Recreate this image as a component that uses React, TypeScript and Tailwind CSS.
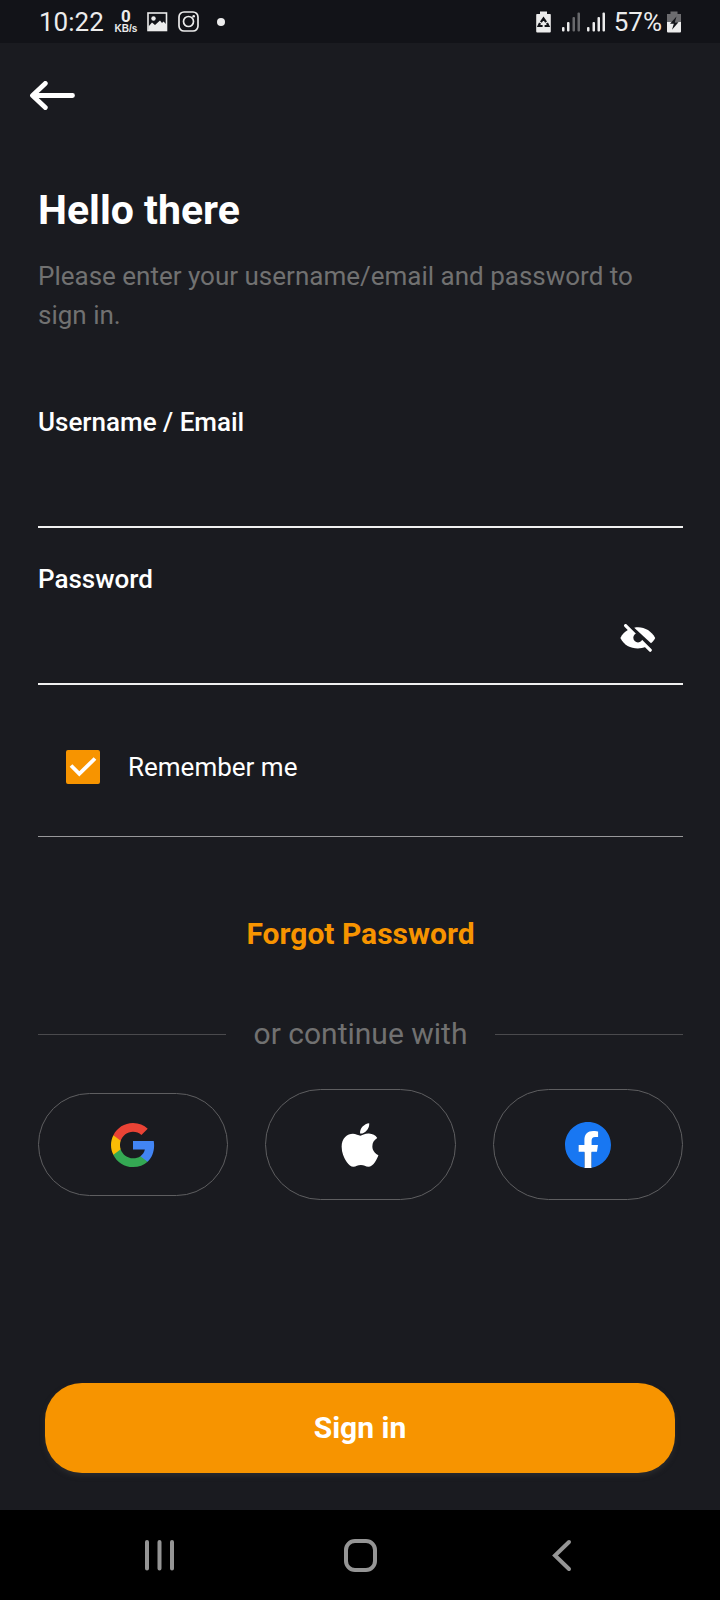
import { useState } from "react";
import { FaApple } from "react-icons/fa";

function StatusBar() {
  return (
    <header className="flex h-[43px] items-center justify-between bg-[#121318] px-[39px] text-[#ececec]">
      <div className="flex items-center">
        <span className="w-[66px] text-[26px] leading-[30px]">10:22</span>
        <span className="ml-[9px] flex w-[24px] flex-col items-center font-bold">
          <span className="text-[17px] leading-[15px]">0</span>
          <span className="font-['Liberation_Sans',sans-serif] text-[10px] leading-[10px]">KB/s</span>
        </span>
        <svg className="ml-[9px] h-[20px] w-[21px]" viewBox="0 0 21 20" aria-hidden="true">
          <rect x="1" y="1" width="18.5" height="17.5" fill="none" stroke="currentColor" strokeWidth="1.6" />
          <circle cx="6.5" cy="6.5" r="2.2" fill="currentColor" />
          <path d="M1.5 14.5 L5 10.5 L8 13 L13 8.5 L15 11 L16.5 9.5 L19 12 V18 H1.5Z" fill="currentColor" />
        </svg>
        <svg className="ml-[10px] h-[21px] w-[21px]" viewBox="0 0 21 21" fill="none" stroke="currentColor" aria-hidden="true">
          <rect x="1" y="1" width="19" height="19" rx="5" strokeWidth="1.7" />
          <circle cx="10.5" cy="10.5" r="5" strokeWidth="1.7" />
          <circle cx="15.7" cy="5.3" r="1.3" fill="currentColor" stroke="none" />
        </svg>
        <span className="ml-[18px] size-[8px] rounded-full bg-[#ececec]" />
      </div>
      <div className="flex items-center">
        <svg className="h-[22px] w-[15px]" viewBox="0 0 15 22" aria-hidden="true">
          <path d="M4 0.5h7v2.5h3q0.8 0 0.8 0.8V20.5q0 1-1 1H1.2q-1 0-1-1V3.8Q0.2 3 1 3h3Z" fill="currentColor" />
          <path d="M4.9 11.2 7.5 7.4l2.6 3.8M11 12l1.4 3H8.6M6.6 15H2.6L4 12" fill="none" stroke="#121318" strokeWidth="2.2" />
        </svg>
        <svg className="ml-[11px] h-[20px] w-[44px]" viewBox="0 0 44 20" fill="currentColor" aria-hidden="true">
          <rect x="0" y="15" width="2.5" height="4.5" rx="1" />
          <rect x="5" y="10" width="2.5" height="9.5" rx="1" />
          <rect x="10.5" y="5" width="2.5" height="14.5" rx="1" opacity=".4" />
          <rect x="15.5" y="0.5" width="2.5" height="19" rx="1" opacity=".4" />
          <rect x="25" y="15" width="2.5" height="4.5" rx="1" />
          <rect x="30.5" y="10" width="2.5" height="9.5" rx="1" />
          <rect x="35.5" y="5" width="2.5" height="14.5" rx="1" />
          <rect x="40.5" y="0.5" width="2.5" height="19" rx="1" />
        </svg>
        <span className="ml-[8px] text-[26px] leading-[30px]">57%</span>
        <svg className="ml-[5px] h-[22px] w-[14px]" viewBox="0 0 14 22" aria-hidden="true">
          <path d="M3.5 0.5h7v2.5H14V11H0V3h3.5Z" fill="#6c6c6f" />
          <path d="M0 11h14v9.5q0 1-1 1H1q-1 0-1-1Z" fill="currentColor" />
          <path d="M9.5 5.5 3 12.8h3.8L5 18.8 11.5 11.2H7.8Z" fill="#121318" />
        </svg>
      </div>
    </header>
  );
}

function EyeOffIcon() {
  return (
    <svg className="h-[30px] w-[36px]" viewBox="0 0 36 30" fill="#fff" aria-hidden="true">
      <mask id="pupil">
        <rect width="36" height="30" fill="#fff" />
        <circle cx="18" cy="13.8" r="4.7" fill="#000" />
      </mask>
      <g mask="url(#pupil)">
        <path d="M0.4 14C2.2 10.4 5 7.6 8.5 5.6L26 22.8C23.2 24 20.5 24.5 17.8 24.5 10.5 24.5 3.8 21 0.4 14Z" />
        <path d="M5.6 1.6 30.2 26.2" stroke="#fff" strokeWidth="3.2" strokeLinecap="round" />
      </g>
      <path d="M14.2 3.7C22.5 1.8 31 6 35.2 14 34.2 16 33 17.6 31 19.3Z" />
    </svg>
  );
}

function GoogleIcon() {
  return (
    <svg className="size-[48px]" viewBox="0 0 24 24" aria-hidden="true">
      <path fill="#4285F4" d="M22.56 12.25c0-.78-.07-1.53-.2-2.25H12v4.26h5.92c-.26 1.37-1.04 2.53-2.21 3.31v2.77h3.57c2.08-1.92 3.28-4.74 3.28-8.09z" />
      <path fill="#34A853" d="M12 23c2.97 0 5.46-.98 7.28-2.66l-3.57-2.77c-.98.66-2.23 1.06-3.71 1.06-2.86 0-5.29-1.93-6.16-4.53H2.18v2.84C3.99 20.53 7.7 23 12 23z" />
      <path fill="#FBBC05" d="M5.84 14.09c-.22-.66-.35-1.36-.35-2.09s.13-1.43.35-2.09V7.07H2.18C1.43 8.55 1 10.22 1 12s.43 3.45 1.18 4.93l2.85-2.22.81-.62z" />
      <path fill="#EA4335" d="M12 5.38c1.62 0 3.06.56 4.21 1.64l3.15-3.15C17.45 2.09 14.97 1 12 1 7.7 1 3.99 3.47 2.18 7.07l3.66 2.84c.87-2.6 3.3-4.53 6.16-4.53z" />
    </svg>
  );
}

function FacebookIcon() {
  return (
    <svg className="size-[46px]" viewBox="8 8 496 496" aria-hidden="true">
      <path fill="#fff" d="M150 100h220v235h-75v169h-78V335h-67Z" />
      <path fill="#1877F2" d="M504 256C504 119 393 8 256 8S8 119 8 256c0 123.78 90.69 226.38 209.25 245V327.69h-63V256h63v-54.64c0-62.15 37-96.48 93.67-96.48 27.14 0 55.52 4.84 55.52 4.84v61h-31.28c-30.8 0-40.41 19.12-40.41 38.73V256h68.78l-11 71.69h-57.78V501C413.31 482.38 504 379.78 504 256z" />
    </svg>
  );
}

export default function App() {
  const [showPassword, setShowPassword] = useState(false);

  return (
    <div className="flex min-h-screen flex-col bg-[#1a1b20] font-[Roboto,sans-serif] text-white">
      <StatusBar />
      <main className="flex flex-1 flex-col pt-[38px] pr-[37px] pb-[37px] pl-[38px]">
        <button type="button" aria-label="Back" className="-ml-2 self-start">
          <svg className="h-[29px] w-[45px]" viewBox="0 0 45 29" fill="none" stroke="#fff" strokeWidth="4.8" strokeLinecap="round" strokeLinejoin="round" aria-hidden="true">
            <path d="M42.5 14.5H3M15.3 2.4 2.5 14.5 15.3 26.6" />
          </svg>
        </button>

        <h1 className="mt-[76px] text-[41px] leading-[48px] font-bold">Hello there</h1>
        <p className="mt-[23px] text-[26px] leading-[39px] text-[#717171]">
          Please enter your username/email and password to sign in.
        </p>

        <form className="mt-[72px] flex flex-1 flex-col" onSubmit={(e) => e.preventDefault()}>
          <label htmlFor="username" className="text-[26px] leading-[30px] font-medium">
            Username / Email
          </label>
          <input
            id="username"
            type="text"
            className="h-[91px] w-full border-b-2 border-[#f0f0f0] bg-transparent text-[26px] outline-none"
          />

          <label htmlFor="password" className="mt-[36px] text-[26px] leading-[30px] font-medium">
            Password
          </label>
          <div className="flex h-[91px] items-center border-b-2 border-[#f0f0f0] pr-[27px]">
            <input
              id="password"
              type={showPassword ? "text" : "password"}
              className="h-full min-w-0 flex-1 bg-transparent text-[26px] outline-none"
            />
            <button
              type="button"
              aria-label="Show password"
              onClick={() => setShowPassword(!showPassword)}
            >
              <EyeOffIcon />
            </button>
          </div>

          <label className="mt-[65px] flex items-center gap-[28px] pl-[28px] text-[26px] leading-[34px]">
            <span className="grid size-[34px]">
              <input
                type="checkbox"
                defaultChecked
                className="peer col-start-1 row-start-1 size-[34px] appearance-none rounded-[2px] border-2 border-[#f79400] checked:bg-[#f79400]"
              />
              <svg className="pointer-events-none invisible col-start-1 row-start-1 size-[34px] peer-checked:visible" viewBox="0 0 34 34" fill="none" stroke="#fff" strokeWidth="3.8" aria-hidden="true">
                <path d="M5 15.5 13.3 23.8 29 8.5" />
              </svg>
            </span>
            Remember me
          </label>

          <hr className="mt-[52px] border-t border-[#98989a]" />

          <a href="#forgot" className="mt-[79px] self-center text-[30px] leading-[36px] font-bold text-[#f79400]">
            Forgot Password
          </a>

          <div className="mt-[64px] flex items-center gap-[28px] text-[30px] leading-[36px] text-[#717171]">
            <span className="h-px flex-1 bg-[#4a4a4d]" />
            or continue with
            <span className="h-px flex-1 bg-[#4a4a4d]" />
          </div>

          <div className="mt-[37px] grid grid-cols-3 items-center gap-[37px]">
            <button type="button" aria-label="Continue with Google" className="flex h-[103px] items-center justify-center rounded-full border border-[#5e5e60]">
              <GoogleIcon />
            </button>
            <button type="button" aria-label="Continue with Apple" className="flex h-[111px] items-center justify-center rounded-full border border-[#5e5e60]">
              <FaApple className="size-[50px]" />
            </button>
            <button type="button" aria-label="Continue with Facebook" className="flex h-[111px] items-center justify-center rounded-full border border-[#5e5e60]">
              <FacebookIcon />
            </button>
          </div>

          <button
            type="submit"
            className="mt-auto mr-[8px] ml-[7px] h-[90px] rounded-[37px] bg-[#f79400] text-[30px] leading-[36px] font-bold shadow-[0_3px_5px_#292a2d]"
          >
            Sign in
          </button>
        </form>
      </main>

      <nav className="grid h-[90px] grid-cols-3 items-center justify-items-center bg-black px-[59px] text-[#959595]">
        <button type="button" aria-label="Recent apps">
          <svg className="h-[33px] w-[33px]" viewBox="0 0 33 33" stroke="currentColor" strokeWidth="4" strokeLinecap="round" aria-hidden="true">
            <path d="M4 3V29.5M16.5 3V29.5M29 3V29.5" />
          </svg>
        </button>
        <button type="button" aria-label="Home">
          <svg className="h-[33px] w-[34px]" viewBox="0 0 34 33" fill="none" stroke="currentColor" strokeWidth="4" aria-hidden="true">
            <rect x="3" y="2" width="29" height="29" rx="9" />
          </svg>
        </button>
        <button type="button" aria-label="Back">
          <svg className="h-[33px] w-[33px]" viewBox="0 0 33 33" fill="none" stroke="currentColor" strokeWidth="4" strokeLinecap="round" aria-hidden="true">
            <path d="M25 3 11 16.5 25 30" />
          </svg>
        </button>
      </nav>
    </div>
  );
}
